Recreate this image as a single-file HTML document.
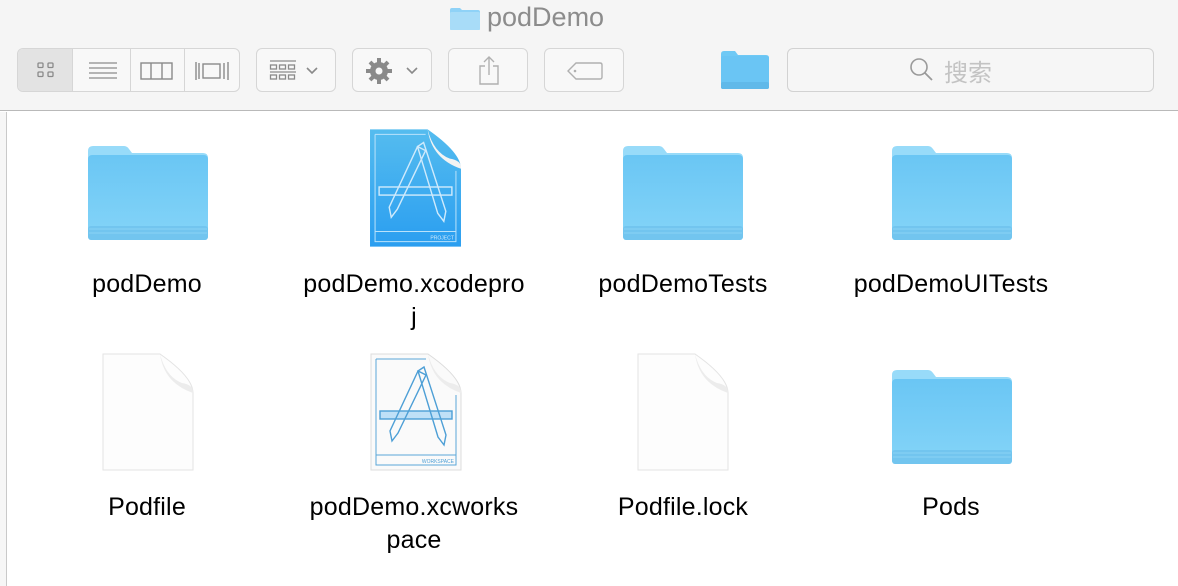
<!DOCTYPE html>
<html><head><meta charset="utf-8"><style>
*{margin:0;padding:0;box-sizing:border-box}
body{width:1178px;height:586px;overflow:hidden;background:#fff;font-family:"Liberation Sans","Noto Sans CJK SC",sans-serif;position:relative}
.tb{position:absolute;left:0;top:0;width:1178px;height:111px;background:#f5f5f5;border-bottom:1px solid #b9b9b9}
.abs{position:absolute}
.btn{position:absolute;top:48px;height:44px;border:1px solid #d6d6d6;border-radius:6px;background:#f8f8f8}
.lbl{position:absolute;width:260px;text-align:center;font-size:25px;line-height:33px;color:#000;letter-spacing:0.2px}
.leftbar{position:absolute;left:0;top:112px;width:7px;height:474px;background:#f6f6f6;border-right:1px solid #c9c9c9}
</style></head><body>
<div class="tb">
  <svg class="abs" style="left:449px;top:7px" width="32" height="24" viewBox="0 0 32 24"><path d="M1 3 Q1 1 3 1 H11 L13 3 H29 Q31 3 31 5 V22 Q31 23 29 23 H3 Q1 23 1 22Z" fill="#8fd2f7"/><rect x="1" y="5" width="30" height="18" rx="1.5" fill="#a8dcf8"/></svg>
  <div class="abs" style="left:487px;top:2px;font-size:27px;color:#8c8c8c">podDemo</div>

  <div class="btn" style="left:17px;width:223px;overflow:hidden">
    <div class="abs" style="left:0;top:0;width:55px;height:42px;background:#e3e3e3;border-right:1px solid #d6d6d6"></div>
    <div class="abs" style="left:112px;top:0;width:1px;height:42px;background:#d6d6d6"></div>
    <div class="abs" style="left:166px;top:0;width:1px;height:42px;background:#d6d6d6"></div>
    <svg class="abs" style="left:18px;top:12px" width="20" height="18"><g fill="none" stroke="#8a8a8a" stroke-width="1.3"><rect x="2" y="2" width="5" height="4.5" rx="1"/><rect x="12" y="2" width="5" height="4.5" rx="1"/><rect x="2" y="11" width="5" height="4.5" rx="1"/><rect x="12" y="11" width="5" height="4.5" rx="1"/></g></svg>
    <svg class="abs" style="left:70px;top:12px" width="30" height="20"><g stroke="#8a8a8a" stroke-width="1.3"><line x1="1" y1="2" x2="29" y2="2"/><line x1="1" y1="7" x2="29" y2="7"/><line x1="1" y1="12" x2="29" y2="12"/><line x1="1" y1="17" x2="29" y2="17"/></g></svg>
    <svg class="abs" style="left:122px;top:12px" width="34" height="20"><g fill="none" stroke="#8a8a8a" stroke-width="1.4"><rect x="1" y="2" width="31" height="16"/><line x1="11" y1="2" x2="11" y2="18"/><line x1="22" y1="2" x2="22" y2="18"/></g></svg>
    <svg class="abs" style="left:176px;top:12px" width="38" height="20"><g fill="none" stroke="#8a8a8a" stroke-width="1.4"><line x1="2" y1="1" x2="2" y2="19"/><line x1="5" y1="2" x2="5" y2="18"/><rect x="9" y="3" width="17" height="14"/><line x1="30" y1="2" x2="30" y2="18"/><line x1="34" y1="1" x2="34" y2="19"/></g></svg>
  </div>
  <div class="btn" style="left:256px;width:80px">
    <svg class="abs" style="left:12px;top:11px" width="60" height="22"><g stroke="#8a8a8a" stroke-width="1.3" fill="none"><line x1="1" y1="1" x2="27" y2="1"/><rect x="1.5" y="5" width="6" height="4"/><rect x="10.5" y="5" width="6" height="4"/><rect x="19.5" y="5" width="6" height="4"/><line x1="1" y1="12" x2="27" y2="12"/><rect x="1.5" y="15" width="6" height="4"/><rect x="10.5" y="15" width="6" height="4"/><rect x="19.5" y="15" width="6" height="4"/><path d="M38 8 L43 13 L48 8" stroke-width="1.6"/></g></svg>
  </div>
  <div class="btn" style="left:352px;width:80px">
    <svg class="abs" style="left:12px;top:8px" width="60" height="28" viewBox="0 0 60 28"><g fill="#8a8a8a"><circle cx="14" cy="14" r="9"/><g stroke="#8a8a8a" stroke-width="4"><line x1="14" y1="1" x2="14" y2="27"/><line x1="1" y1="14" x2="27" y2="14"/><line x1="5" y1="5" x2="23" y2="23"/><line x1="23" y1="5" x2="5" y2="23"/></g></g><circle cx="14" cy="14" r="3.5" fill="#f8f8f8"/><path d="M42 11 L47 16 L52 11" stroke="#8a8a8a" stroke-width="1.6" fill="none"/></svg>
  </div>
  <div class="btn" style="left:448px;width:80px">
    <svg class="abs" style="left:28px;top:6px" width="24" height="32"><g stroke="#b0b0b0" stroke-width="1.4" fill="none"><path d="M8 11 H3 V29 H21 V11 H16"/><line x1="12" y1="2" x2="12" y2="20"/><path d="M7 7 L12 2 L17 7"/></g></svg>
  </div>
  <div class="btn" style="left:544px;width:80px">
    <svg class="abs" style="left:22px;top:12px" width="36" height="20"><path d="M9 2 H33 Q35 2 35 4 V16 Q35 18 33 18 H9 L1 10Z" stroke="#b0b0b0" stroke-width="1.4" fill="none"/><circle cx="8" cy="10" r="1.3" fill="#b0b0b0"/></svg>
  </div>
  <svg class="abs" style="left:721px;top:51px" width="48" height="38" viewBox="0 0 48 38"><path d="M0 3 Q0 0 3 0 H14 L17 4 H45 Q48 4 48 7 V35 Q48 38 45 38 H3 Q0 38 0 35Z" fill="#6fc9f5"/><rect x="0" y="5" width="48" height="33" rx="2" fill="#6ac5f4"/><rect x="0" y="31" width="48" height="7" rx="2" fill="#60b9e9"/></svg>
  <div class="abs" style="left:787px;top:48px;width:367px;height:44px;border:1px solid #d2d2d2;border-radius:6px;background:#f6f6f6"></div>
  <svg class="abs" style="left:909px;top:57px" width="26" height="26"><circle cx="10" cy="10" r="8" stroke="#9a9a9a" stroke-width="1.6" fill="none"/><line x1="16" y1="16" x2="23" y2="23" stroke="#9a9a9a" stroke-width="1.8"/></svg>
  <div class="abs" style="left:944px;top:53px;font-size:24px;color:#c3c3c3">搜索</div>
</div>
<div class="leftbar"></div>

<svg width="0" height="0" style="position:absolute"><defs>
<linearGradient id="fg" x1="0" y1="0" x2="0" y2="1"><stop offset="0" stop-color="#6ac6f4"/><stop offset="1" stop-color="#84d4f8"/></linearGradient>
<symbol id="folder" viewBox="0 0 120 96"><path d="M0 6 Q0 1 5 1 H36 Q39 1 41 4 L44 8 H115 Q120 8 120 13 V40 H0Z" fill="#98dbf9"/><rect x="0" y="10" width="120" height="85" rx="4" fill="url(#fg)"/><rect x="0" y="81" width="120" height="14" rx="3" fill="#72c5ef"/><line x1="1" y1="84" x2="119" y2="84" stroke="#8ad3f5"/><line x1="1" y1="88" x2="119" y2="88" stroke="#8ad3f5"/></symbol>
<symbol id="doc" viewBox="0 0 92 118"><path d="M1 1 H58 Q91 24 91 40 V117 H1Z" fill="#fdfdfd" stroke="#e3e3e3"/><path d="M58 1 Q62 30 91 40 Q92 32 80 30 Q64 24 58 1Z" fill="#ececec"/></symbol>
<symbol id="xapp" viewBox="0 0 92 118"><g fill="none" stroke-width="1.4"><rect x="10" y="58" width="72" height="8"/><path d="M48 18 L20 78 L22 88 L28 80 L56 22Z"/><path d="M48 18 L54 14 L76 82 L74 92 L68 84Z"/></g></symbol>
</defs></svg>

<svg class="abs" style="left:88px;top:145px" width="120" height="96"><use href="#folder"/></svg>
<svg class="abs" style="left:623px;top:145px" width="120" height="96"><use href="#folder"/></svg>
<svg class="abs" style="left:892px;top:145px" width="120" height="96"><use href="#folder"/></svg>
<svg class="abs" style="left:892px;top:369px" width="120" height="96"><use href="#folder"/></svg>

<svg class="abs" style="left:369px;top:128px" width="93" height="120" viewBox="0 0 92 118"><defs><linearGradient id="xg" x1="0" y1="0" x2="0" y2="1"><stop offset="0" stop-color="#55bcef"/><stop offset="1" stop-color="#2a9ef0"/></linearGradient></defs><path d="M1 1 H58 Q91 24 91 40 V117 H1Z" fill="url(#xg)"/><path d="M58 1 Q62 30 91 40 Q92 32 80 30 Q64 24 58 1Z" fill="#f3f3f3"/><g stroke="#b9e2fb"><path d="M6 6 H56 M6 6 V112 H86 V42" fill="none"/><line x1="6" y1="102" x2="86" y2="102"/></g><use href="#xapp" stroke="#cfeafc"/><text x="84" y="110" font-size="5" fill="#cfeafc" text-anchor="end" font-family="Liberation Sans">PROJECT</text></svg>

<svg class="abs" style="left:102px;top:353px" width="92" height="118"><use href="#doc"/></svg>
<svg class="abs" style="left:637px;top:353px" width="92" height="118"><use href="#doc"/></svg>
<svg class="abs" style="left:370px;top:353px" width="92" height="118" viewBox="0 0 92 118"><path d="M1 1 H58 Q91 24 91 40 V117 H1Z" fill="#fafafa" stroke="#dcdcdc"/><path d="M58 1 Q62 30 91 40 Q92 32 80 30 Q64 24 58 1Z" fill="#ececec"/><g stroke="#5aa7d8" fill="none"><path d="M6 6 H56 M6 6 V112 H86 V42"/><line x1="6" y1="102" x2="86" y2="102"/></g><g fill="#bfe0f7"><rect x="10" y="58" width="72" height="8"/></g><use href="#xapp" stroke="#4d9fd6"/><text x="84" y="110" font-size="5" fill="#4d9fd6" text-anchor="end" font-family="Liberation Sans">WORKSPACE</text></svg>

<div class="lbl" style="left:17px;top:268px">podDemo</div>
<div class="lbl" style="left:284px;top:268px">podDemo.xcodepro<br>j</div>
<div class="lbl" style="left:553px;top:268px">podDemoTests</div>
<div class="lbl" style="left:821px;top:268px">podDemoUITests</div>
<div class="lbl" style="left:17px;top:491px">Podfile</div>
<div class="lbl" style="left:284px;top:491px">podDemo.xcworks<br>pace</div>
<div class="lbl" style="left:553px;top:491px">Podfile.lock</div>
<div class="lbl" style="left:821px;top:491px">Pods</div>
</body></html>
